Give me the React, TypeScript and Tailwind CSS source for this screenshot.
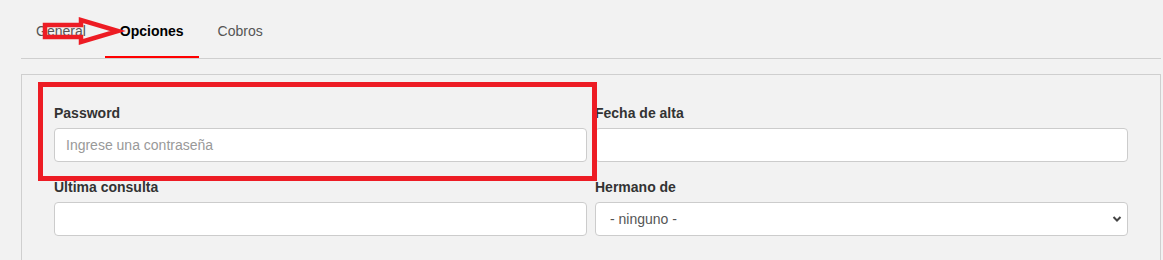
import React from "react";

function Field({ label, children }: { label: string; children: React.ReactNode }) {
  return (
    <div className="mb-[15px]">
      <label className="block h-5 leading-5 mb-[5px] font-bold text-[#333]">{label}</label>
      {children}
    </div>
  );
}

const inputCls =
  "block w-full h-[34px] bg-white border border-[#ccc] rounded-[4px] pl-[11px] pr-3 text-[14px] text-[#555] placeholder:text-[#999] outline-none font-['Liberation_Sans',Arial,sans-serif]";

export default function App() {
  return (
    <div className="relative w-[1163px] h-[260px] overflow-hidden bg-[#f2f2f2] text-[14px] font-['Liberation_Sans',Arial,sans-serif]">
      <div className="ml-[21px] w-[1140px]">
        <div className="flex gap-1 pt-[6px] border-b border-[#cfcfcf]">
          <div className="px-[15px] py-[15px] leading-5 border-b-2 border-transparent text-[#555]">General</div>
          <div className="px-[15px] py-[15px] leading-5 border-b-2 border-[#ff0000] text-black font-bold">Opciones</div>
          <div className="px-[15px] py-[15px] leading-5 border-b-2 border-transparent text-[#555]">Cobros</div>
        </div>
        <div className="mt-[15px] border border-[#cfcfcf] pt-[28px] pl-[32px] pr-[32px] pb-[20px]">
          <div className="grid grid-cols-2 gap-x-2">
            <Field label="Password">
              <input className={inputCls} placeholder="Ingrese una contraseña" type="password" />
            </Field>
            <Field label="Fecha de alta">
              <input className={inputCls} />
            </Field>
            <Field label="Ultima consulta">
              <input className={inputCls} />
            </Field>
            <Field label="Hermano de">
              <div className="relative">
                <select className={inputCls + " appearance-none pl-[14px]"} defaultValue="0">
                  <option value="0">- ninguno -</option>
                </select>
                <svg
                  className="absolute right-[6px] top-[13px] pointer-events-none"
                  width="10"
                  height="8"
                  viewBox="0 0 10 8"
                >
                  <path d="M1.5 2 L5 5.5 L8.5 2" fill="none" stroke="#444" strokeWidth="2" />
                </svg>
              </div>
            </Field>
          </div>
        </div>
      </div>

      {/* red annotation rectangle */}
      <div className="absolute left-[38px] top-[82px] w-[559px] h-[99px] border-[5px] border-[#ed1c24] pointer-events-none" />

      {/* red annotation arrow */}
      <svg className="absolute left-0 top-0 pointer-events-none" width="130" height="50" viewBox="0 0 130 50">
        <polygon
          points="45,25 81,25 81,20 118,31 81,42 81,37 45,37"
          fill="none"
          stroke="#ed1c24"
          strokeWidth="4.5"
          strokeLinejoin="miter"
        />
      </svg>
    </div>
  );
}
